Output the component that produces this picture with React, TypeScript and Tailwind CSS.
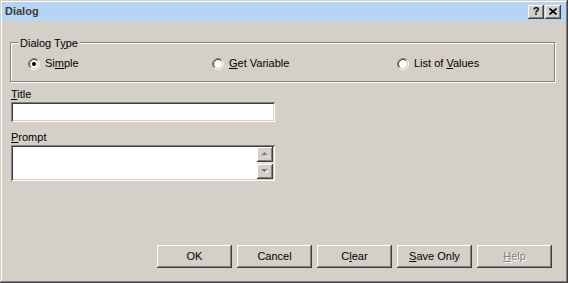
import React from 'react';

const raised =
  'shadow-[inset_-1px_-1px_0_#404040,inset_1px_1px_0_#ffffff,inset_-2px_-2px_0_#808080]';
const sunken =
  'shadow-[inset_1px_1px_0_#808080,inset_-1px_-1px_0_#ffffff,inset_2px_2px_0_#404040,inset_-2px_-2px_0_#d4d0c8]';

const Radio: React.FC<{ checked?: boolean }> = ({ checked }) => (
  <svg width="12" height="12" viewBox="0 0 12 12" className="shrink-0">
    <circle cx="6" cy="6" r="4.2" fill="#ffffff" />
    <path d="M9.89 2.11A5.5 5.5 0 0 0 2.11 9.89" stroke="#808080" fill="none" />
    <path d="M2.11 9.89A5.5 5.5 0 0 0 9.89 2.11" stroke="#ffffff" fill="none" />
    <path d="M9.18 2.82A4.5 4.5 0 0 0 2.82 9.18" stroke="#404040" fill="none" />
    <path d="M2.82 9.18A4.5 4.5 0 0 0 9.18 2.82" stroke="#d4d0c8" fill="none" />
    {checked && <circle cx="6" cy="6" r="2" fill="#000000" />}
  </svg>
);

const RadioOption: React.FC<{ checked?: boolean; width: string; children: React.ReactNode }> = ({
  checked,
  width,
  children,
}) => (
  <div className={`flex items-center gap-[5px] ${width}`}>
    <Radio checked={checked} />
    <span className="text-black">{children}</span>
  </div>
);

const Arrow: React.FC<{ down?: boolean }> = ({ down }) => (
  <svg width="8" height="5" viewBox="0 0 8 5">
    {down ? (
      <>
        <path d="M1 1h7L4.5 4.5z" fill="#ffffff" />
        <path d="M0 0h7L3.5 3.5z" fill="#808080" />
      </>
    ) : (
      <>
        <path d="M4.5 1L8 4.5H1z" fill="#ffffff" />
        <path d="M3.5 0L7 3.5H0z" fill="#808080" />
      </>
    )}
  </svg>
);

const DialogButton: React.FC<{ disabled?: boolean; children: React.ReactNode }> = ({
  disabled,
  children,
}) => (
  <div
    className={`w-[75px] h-[23px] flex items-center justify-center bg-[#d4d0c8] ${raised} ${
      disabled ? 'text-[#808080] [text-shadow:1px_1px_0_#ffffff]' : 'text-black'
    }`}
  >
    {children}
  </div>
);

export default function App() {
  return (
    <div
      className={`w-[568px] h-[283px] bg-[#d4d0c8] p-[2px] flex flex-col font-['Liberation_Sans',Arial,sans-serif] text-[11px] leading-[13px] shadow-[inset_-1px_-1px_0_#404040,inset_1px_1px_0_#d4d0c8,inset_-2px_-2px_0_#808080,inset_2px_2px_0_#ffffff]`}
    >
      {/* Title bar */}
      <div className="h-[19px] bg-[#b6d4f4] flex items-center pl-[3px] pr-[5px]">
        <span className="font-bold text-[#3c3c3c] text-[11px]">Dialog</span>
        <div className="ml-auto flex gap-[1px]">
          <div className={`w-[16px] h-[14px] bg-[#d4d0c8] flex items-center justify-center ${raised}`}>
            <span className="font-bold text-black text-[11px] leading-none -mt-[1px]">?</span>
          </div>
          <div className={`w-[16px] h-[14px] bg-[#d4d0c8] flex items-center justify-center ${raised}`}>
            <svg width="8" height="7" viewBox="0 0 8 7" className="-mt-[1px]">
              <path d="M0.5 0.5L7.5 6.5M7.5 0.5L0.5 6.5" stroke="#000000" strokeWidth="1.6" />
            </svg>
          </div>
        </div>
      </div>

      {/* Dialog Type group */}
      <div className="relative mt-[21px] ml-[8px] mr-[11px] h-[40px] border border-[#808080] shadow-[inset_1px_1px_0_#ffffff,1px_1px_0_#ffffff]">
        <span className="absolute left-[7px] -top-[6px] px-[2px] bg-[#d4d0c8] text-black">
          Dialog T<u>y</u>pe
        </span>
        <div className="flex pt-[14px] pl-[17px]">
          <RadioOption checked width="w-[184px]">
            Si<u>m</u>ple
          </RadioOption>
          <RadioOption width="w-[185px]">
            <u>G</u>et Variable
          </RadioOption>
          <RadioOption width="w-[140px]">
            List of <u>V</u>alues
          </RadioOption>
        </div>
      </div>

      {/* Title */}
      <div className="mt-[6px] ml-[9px] text-black">
        <u>T</u>itle
      </div>
      <div className={`mt-[1px] ml-[9px] w-[264px] h-[20px] bg-white ${sunken}`} />

      {/* Prompt */}
      <div className="mt-[9px] ml-[9px] text-black">
        <u>P</u>rompt
      </div>
      <div className={`mt-[1px] ml-[9px] w-[264px] h-[36px] bg-white p-[2px] flex ${sunken}`}>
        <div className="flex-1" />
        <div className="w-[16px] flex flex-col bg-[repeating-conic-gradient(#ffffff_0_25%,#d4d0c8_0_50%)] bg-[length:2px_2px]">
          <div className={`h-[15px] bg-[#d4d0c8] flex items-center justify-center ${raised}`}>
            <Arrow />
          </div>
          <div className="flex-1" />
          <div className={`h-[15px] bg-[#d4d0c8] flex items-center justify-center ${raised}`}>
            <Arrow down />
          </div>
        </div>
      </div>

      {/* Buttons */}
      <div className="mt-auto flex justify-end gap-[5px] pr-[14px] pb-[13px]">
        <DialogButton>OK</DialogButton>
        <DialogButton>Cancel</DialogButton>
        <DialogButton>
          C<u>l</u>ear
        </DialogButton>
        <DialogButton>
          <u>S</u>ave Only
        </DialogButton>
        <DialogButton disabled>
          <u>H</u>elp
        </DialogButton>
      </div>
    </div>
  );
}
